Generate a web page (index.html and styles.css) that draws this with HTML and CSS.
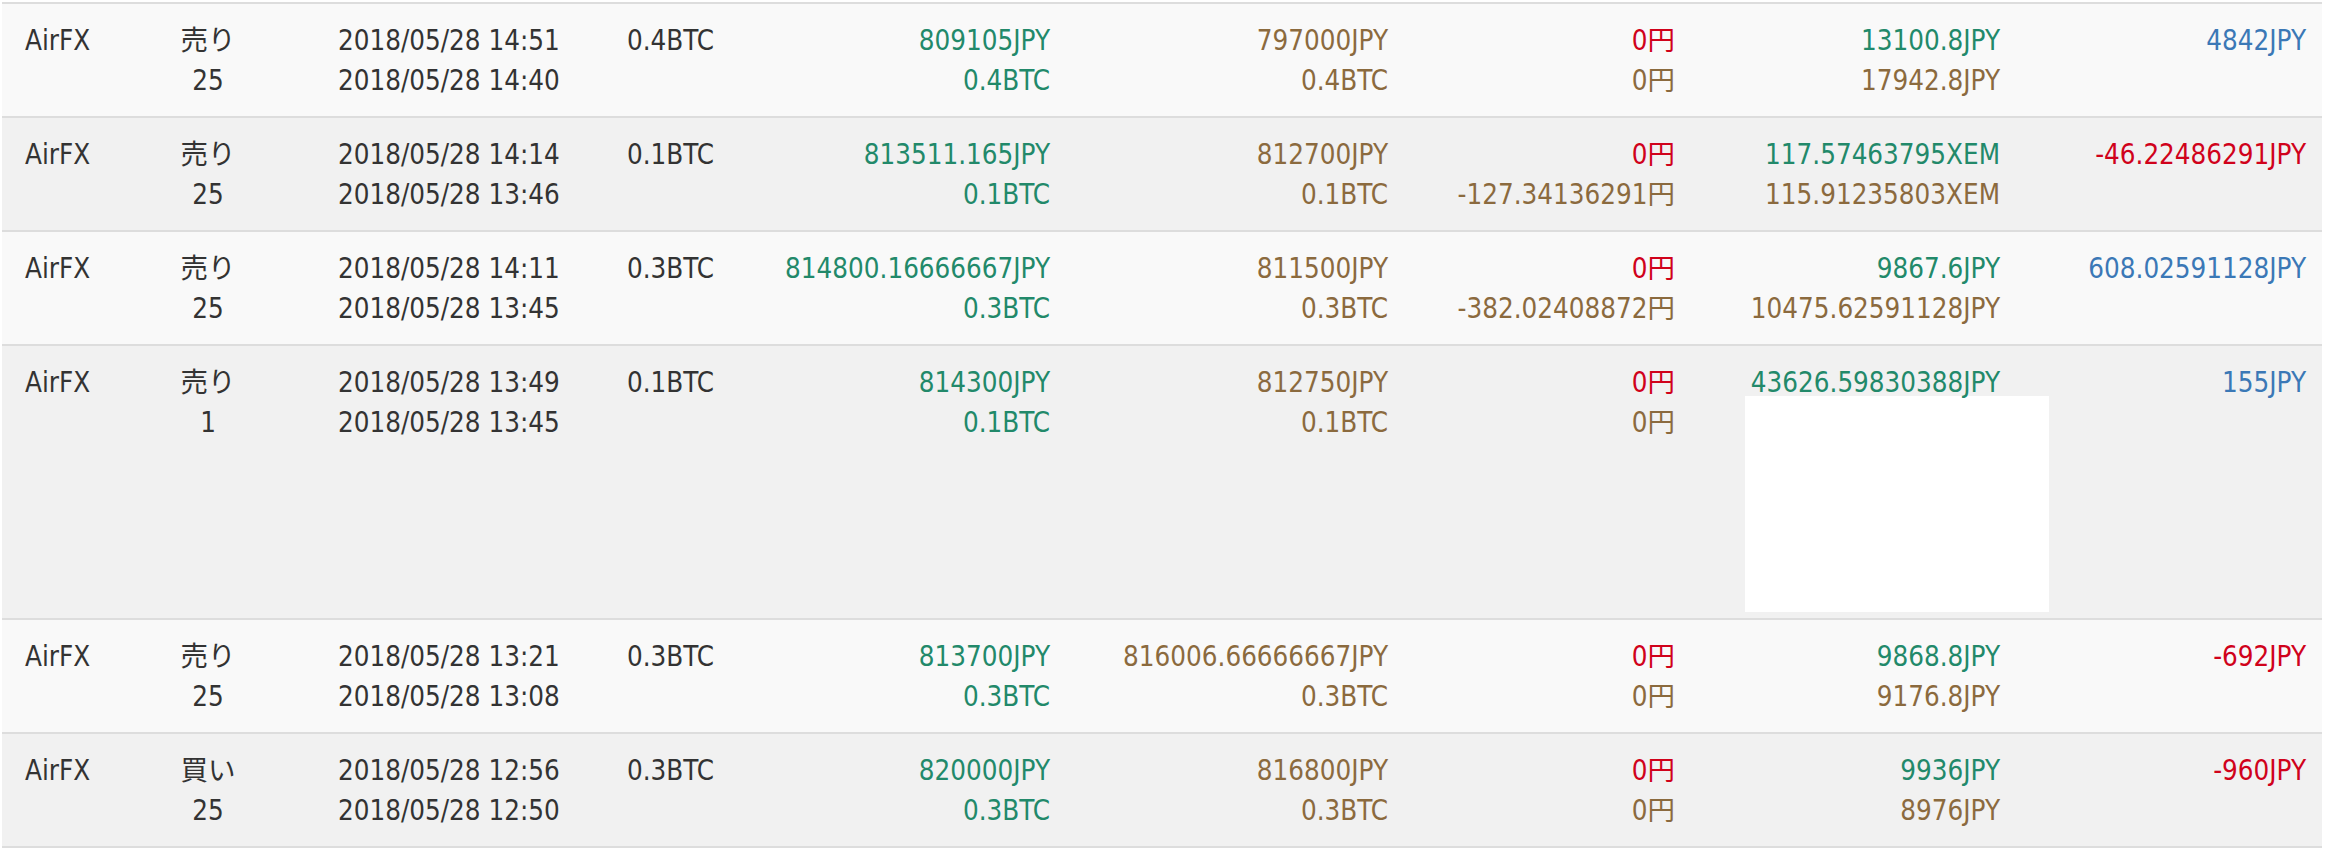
FILE: index.html
```html
<!DOCTYPE html>
<html lang="ja">
<head>
<meta charset="utf-8">
<title>取引履歴</title>
<link rel="stylesheet" href="styles.css">
</head>
<body>
<table class="trades">
  <colgroup>
    <col class="w1"><col class="w2"><col class="w3"><col class="w4"><col class="w5"><col class="w6"><col class="w7"><col class="w8"><col class="w9">
  </colgroup>
  <tbody>
    <tr>
      <td class="ex">AirFX</td>
      <td class="side"><div>売り</div><div>25</div></td>
      <td class="date"><div>2018/05/28 14:51</div><div>2018/05/28 14:40</div></td>
      <td class="amt">0.4BTC</td>
      <td class="num"><div class="g">809105JPY</div><div class="g">0.4BTC</div></td>
      <td class="num"><div class="b">797000JPY</div><div class="b">0.4BTC</div></td>
      <td class="num"><div class="r">0円</div><div class="b">0円</div></td>
      <td class="num"><div class="g">13100.8JPY</div><div class="b">17942.8JPY</div></td>
      <td class="num"><div class="bl">4842JPY</div></td>
    </tr>
    <tr>
      <td class="ex">AirFX</td>
      <td class="side"><div>売り</div><div>25</div></td>
      <td class="date"><div>2018/05/28 14:14</div><div>2018/05/28 13:46</div></td>
      <td class="amt">0.1BTC</td>
      <td class="num"><div class="g">813511.165JPY</div><div class="g">0.1BTC</div></td>
      <td class="num"><div class="b">812700JPY</div><div class="b">0.1BTC</div></td>
      <td class="num"><div class="r">0円</div><div class="b">-127.34136291円</div></td>
      <td class="num"><div class="g">117.57463795XEM</div><div class="b">115.91235803XEM</div></td>
      <td class="num"><div class="r">-46.22486291JPY</div></td>
    </tr>
    <tr>
      <td class="ex">AirFX</td>
      <td class="side"><div>売り</div><div>25</div></td>
      <td class="date"><div>2018/05/28 14:11</div><div>2018/05/28 13:45</div></td>
      <td class="amt">0.3BTC</td>
      <td class="num"><div class="g">814800.16666667JPY</div><div class="g">0.3BTC</div></td>
      <td class="num"><div class="b">811500JPY</div><div class="b">0.3BTC</div></td>
      <td class="num"><div class="r">0円</div><div class="b">-382.02408872円</div></td>
      <td class="num"><div class="g">9867.6JPY</div><div class="b">10475.62591128JPY</div></td>
      <td class="num"><div class="bl">608.02591128JPY</div></td>
    </tr>
    <tr>
      <td class="ex">AirFX</td>
      <td class="side"><div>売り</div><div>1</div></td>
      <td class="date"><div>2018/05/28 13:49</div><div>2018/05/28 13:45</div></td>
      <td class="amt">0.1BTC</td>
      <td class="num"><div class="g">814300JPY</div><div class="g">0.1BTC</div></td>
      <td class="num"><div class="b">812750JPY</div><div class="b">0.1BTC</div></td>
      <td class="num"><div class="r">0円</div><div class="b">0円</div></td>
      <td class="num has-img"><div class="g">43626.59830388JPY</div><div class="blank"></div></td>
      <td class="num"><div class="bl">155JPY</div></td>
    </tr>
    <tr>
      <td class="ex">AirFX</td>
      <td class="side"><div>売り</div><div>25</div></td>
      <td class="date"><div>2018/05/28 13:21</div><div>2018/05/28 13:08</div></td>
      <td class="amt">0.3BTC</td>
      <td class="num"><div class="g">813700JPY</div><div class="g">0.3BTC</div></td>
      <td class="num"><div class="b">816006.66666667JPY</div><div class="b">0.3BTC</div></td>
      <td class="num"><div class="r">0円</div><div class="b">0円</div></td>
      <td class="num"><div class="g">9868.8JPY</div><div class="b">9176.8JPY</div></td>
      <td class="num"><div class="r">-692JPY</div></td>
    </tr>
    <tr>
      <td class="ex">AirFX</td>
      <td class="side"><div>買い</div><div>25</div></td>
      <td class="date"><div>2018/05/28 12:56</div><div>2018/05/28 12:50</div></td>
      <td class="amt">0.3BTC</td>
      <td class="num"><div class="g">820000JPY</div><div class="g">0.3BTC</div></td>
      <td class="num"><div class="b">816800JPY</div><div class="b">0.3BTC</div></td>
      <td class="num"><div class="r">0円</div><div class="b">0円</div></td>
      <td class="num"><div class="g">9936JPY</div><div class="b">8976JPY</div></td>
      <td class="num"><div class="r">-960JPY</div></td>
    </tr>
  </tbody>
</table>
</body>
</html>
```
FILE: styles.css
```css
html, body {
  margin: 0;
  padding: 0;
  background: #ffffff;
}
body {
  padding: 2px 0 0 2px;
  font-family: "DejaVu Sans Condensed", "DejaVu Sans", "Noto Sans CJK JP", sans-serif;
  font-size: 27.5px;
  line-height: 40px;
  color: #333333;
}
.trades {
  width: 2320px;
  table-layout: fixed;
  border-collapse: collapse;
  border-spacing: 0;
  border-bottom: 2px solid #dddddd;
}
.w1 { width: 92px; }
.w2 { width: 228px; }
.w3 { width: 289px; }
.w4 { width: 149px; }
.w5 { width: 306px; }
.w6 { width: 338px; }
.w7 { width: 287px; }
.w8 { width: 325px; }
.w9 { width: 306px; }

.trades tr:nth-child(odd) { background: #f9f9f9; }
.trades tr:nth-child(even) { background: #f1f1f1; }

.trades td {
  border-top: 2px solid #dddddd;
  padding: 16px 16px;
  vertical-align: top;
  white-space: nowrap;
}
.trades td > div { height: 40px; }
.trades td.ex { padding-left: 23px; padding-right: 0; }
.trades td.side { text-align: center; }
.trades td.num { text-align: right; }

.trades td.has-img { padding-bottom: 6px; }
.trades td > div.blank {
  width: 304px;
  height: 216px;
  margin: -6px -49px 0 auto;
  background: #ffffff;
}

.g { color: #22896a; }
.b { color: #8b6a3e; }
.r { color: #d0021b; }
.bl { color: #3b78b6; }
```
